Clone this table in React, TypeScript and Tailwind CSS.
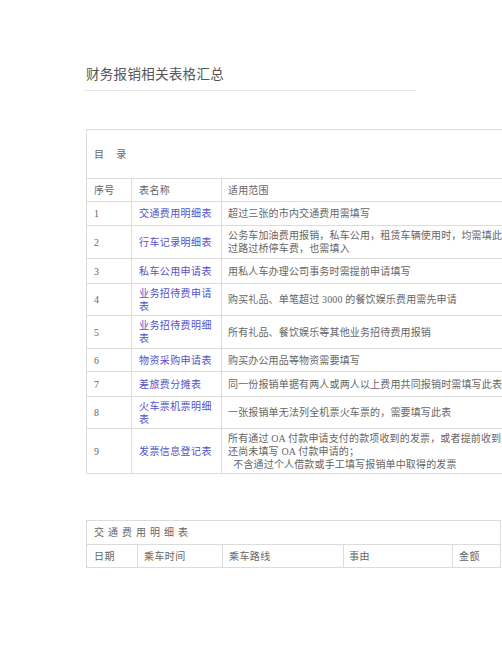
import React from 'react';

interface FormRow {
  no: string;
  name: string[];
  scope: string[];
  h: string;
}

const rows: FormRow[] = [
  { no: '1', name: ['交通费用明细表'], scope: ['超过三张的市内交通费用需填写'], h: 'h-[24px]' },
  {
    no: '2',
    name: ['行车记录明细表'],
    scope: ['公务车加油费用报销，私车公用，租赁车辆使用时，均需填此', '过路过桥停车费，也需填入'],
    h: 'h-[33px]',
  },
  { no: '3', name: ['私车公用申请表'], scope: ['用私人车办理公司事务时需提前申请填写'], h: 'h-[25px]' },
  { no: '4', name: ['业务招待费申请', '表'], scope: ['购买礼品、单笔超过 3000 的餐饮娱乐费用需先申请'], h: 'h-[32px]' },
  { no: '5', name: ['业务招待费明细', '表'], scope: ['所有礼品、餐饮娱乐等其他业务招待费用报销'], h: 'h-[33px]' },
  { no: '6', name: ['物资采购申请表'], scope: ['购买办公用品等物资需要填写'], h: 'h-[23px]' },
  { no: '7', name: ['差旅费分摊表'], scope: ['同一份报销单据有两人或两人以上费用共同报销时需填写此表'], h: 'h-[25px]' },
  { no: '8', name: ['火车票机票明细', '表'], scope: ['一张报销单无法列全机票火车票的，需要填写此表'], h: 'h-[32px]' },
  {
    no: '9',
    name: ['发票信息登记表'],
    scope: [
      '所有通过 OA 付款申请支付的款项收到的发票，或者提前收到',
      '还尚未填写 OA 付款申请的；',
      '\u00a0\u00a0不含通过个人借款或手工填写报销单中取得的发票',
    ],
    h: 'h-[45px]',
  },
];

const cell = 'border border-[#dcdcdc] align-middle';

export default function App() {
  return (
    <div className="w-[502px] h-[649px] overflow-hidden bg-white font-[family-name:'Liberation_Serif','Noto_Sans_CJK_SC',serif] text-[#666]">
      <div className="pl-[84px] pt-[66px]">
        {/* page title */}
        <div className="w-[332px] border-b border-[#e6e6e6] pl-[2px] pb-[6px]">
          <h1 className="text-[13.5px] leading-[18px] tracking-[0.3px] text-[#555] font-normal">财务报销相关表格汇总</h1>
        </div>

        {/* directory table */}
        <table className="mt-[38px] ml-[2px] border-collapse text-[10px] leading-[13px] tracking-[0.15px] table-fixed w-[480px]">
          <colgroup>
            <col className="w-[45px]" />
            <col className="w-[90px]" />
            <col className="w-[345px]" />
          </colgroup>
          <tbody>
            <tr className="h-[49px]">
              <td colSpan={3} className={`${cell} pl-[7px]`}>
                目<span className="ml-[12px]">录</span>
              </td>
            </tr>
            <tr className="h-[23px]">
              <td className={`${cell} pl-[7px]`}>序号</td>
              <td className={`${cell} pl-[7px] tracking-[0.4px]`}>表名称</td>
              <td className={`${cell} pl-[6px]`}>适用范围</td>
            </tr>
            {rows.map((r) => (
              <tr key={r.no} className={r.h}>
                <td className={`${cell} pl-[7px]`}>{r.no}</td>
                <td className={`${cell} pl-[7px] tracking-[0.4px] text-[#5252c9]`}>
                  {r.name.map((n) => (
                    <div key={n}>{n}</div>
                  ))}
                </td>
                <td className={`${cell} pl-[6px] whitespace-nowrap overflow-hidden`}>
                  {r.scope.map((s) => (
                    <div key={s}>{s}</div>
                  ))}
                </td>
              </tr>
            ))}
          </tbody>
        </table>

        {/* transport expense table */}
        <table className="mt-[46px] ml-[2px] border-collapse text-[10px] leading-[13px] tracking-[0.4px] table-fixed w-[414px]">
          <colgroup>
            <col className="w-[51px]" />
            <col className="w-[85px]" />
            <col className="w-[121px]" />
            <col className="w-[109px]" />
            <col className="w-[48px]" />
          </colgroup>
          <tbody>
            <tr className="h-[24px]">
              <td colSpan={5} className={`${cell} pl-[7px] tracking-[4px]`}>交通费用明细表</td>
            </tr>
            <tr className="h-[23px]">
              <td className={`${cell} pl-[7px]`}>日期</td>
              <td className={`${cell} pl-[6px]`}>乘车时间</td>
              <td className={`${cell} pl-[6px]`}>乘车路线</td>
              <td className={`${cell} pl-[5px]`}>事由</td>
              <td className={`${cell} pl-[6px]`}>金额</td>
            </tr>
          </tbody>
        </table>
      </div>
    </div>
  );
}
